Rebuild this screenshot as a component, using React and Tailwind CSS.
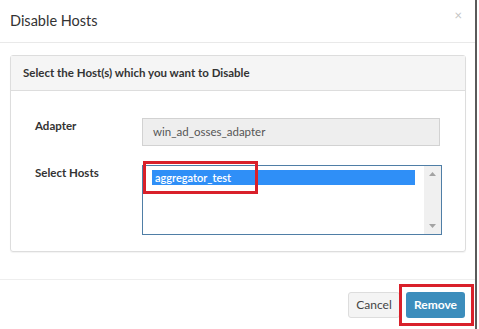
export default function App() {
  return (
    <div
      className="w-[479px] h-[329px] bg-white flex overflow-hidden"
      style={{ fontFamily: 'Lato, "Open Sans", sans-serif' }}
    >
      <div className="w-[477px] flex flex-col border-r-2 border-[#5a5a5a]">
        {/* header */}
        <div className="h-[43px] flex items-center justify-between pl-[10px] pr-[13px] border-b border-[#e9e9e9]">
          <span className="text-[14.5px] text-[#333]">Disable Hosts</span>
          <span className="text-[13px] text-[#c4c4c4] -mt-[10px]">×</span>
        </div>

        {/* body */}
        <div className="px-[10px] pt-[12px] h-[237px] border-b border-[#eeeeee]">
          <div className="w-[456px] h-[197px] border border-[#dddddd] rounded-[3px] flex flex-col shadow-[0_1px_1px_rgba(0,0,0,0.05)]">
            <div className="h-[35px] bg-[#f5f5f5] border-b border-[#dddddd] flex items-center pl-[12px]">
              <span className="text-[11.5px] font-bold text-[#333]">Select the Host(s) which you want to Disable</span>
            </div>
            <div className="flex flex-col pt-[27px] gap-[19px]">
              <div className="flex items-start">
                <span className="w-[131px] pl-[24px] text-[11.5px] leading-[16px] font-bold text-[#333]">Adapter</span>
                <div className="w-[298px] h-[28px] bg-[#eeeeee] border border-[#d2d2d2] flex items-center pl-[10px] text-[11.5px] text-[#555]">
                  win_ad_osses_adapter
                </div>
              </div>
              <div className="flex items-start">
                <span className="w-[131px] pl-[24px] text-[11.5px] leading-[16px] font-bold text-[#333]">Select Hosts</span>
                <div className="relative w-[300px] h-[70px] border border-[#4f7ea6] flex">
                  <div className="flex-1 pl-[9px] pt-[4px]">
                    <div className="w-[263px] h-[15px] bg-[#2f8ff7] text-white text-[11px] font-semibold leading-[15px] pl-[3px]">
                      aggregator_test
                    </div>
                  </div>
                  <div className="w-[17px] bg-[#f0f0f0] flex flex-col items-center justify-between py-[6px]">
                    <svg width="7" height="4" viewBox="0 0 7 4"><path d="M0 4 L3.5 0 L7 4 Z" fill="#a3a3a3" /></svg>
                    <svg width="7" height="4" viewBox="0 0 7 4"><path d="M0 0 L3.5 4 L7 0 Z" fill="#a3a3a3" /></svg>
                  </div>
                  <div className="absolute left-[0px] top-[-5px] w-[115px] h-[33px] border-[3px] border-[#d9202a]" />
                </div>
              </div>
            </div>
          </div>
        </div>

        {/* footer */}
        <div className="flex-1 flex items-start justify-end pt-[12px] pr-[1px]">
          <button className="w-[52px] h-[26px] bg-[#f4f4f4] border border-[#dddddd] rounded-[3px] text-[12px] text-[#444]">
            Cancel
          </button>
          <div className="-mt-[8px] -ml-[1px] border-[3px] border-[#d9202a] w-[75px] h-[42px] flex items-center pl-[4px]">
            <button className="w-[59px] h-[26px] bg-[#3c8dbc] rounded-[3px] text-[12px] font-bold text-white">
              Remove
            </button>
          </div>
        </div>
      </div>
    </div>
  );
}
